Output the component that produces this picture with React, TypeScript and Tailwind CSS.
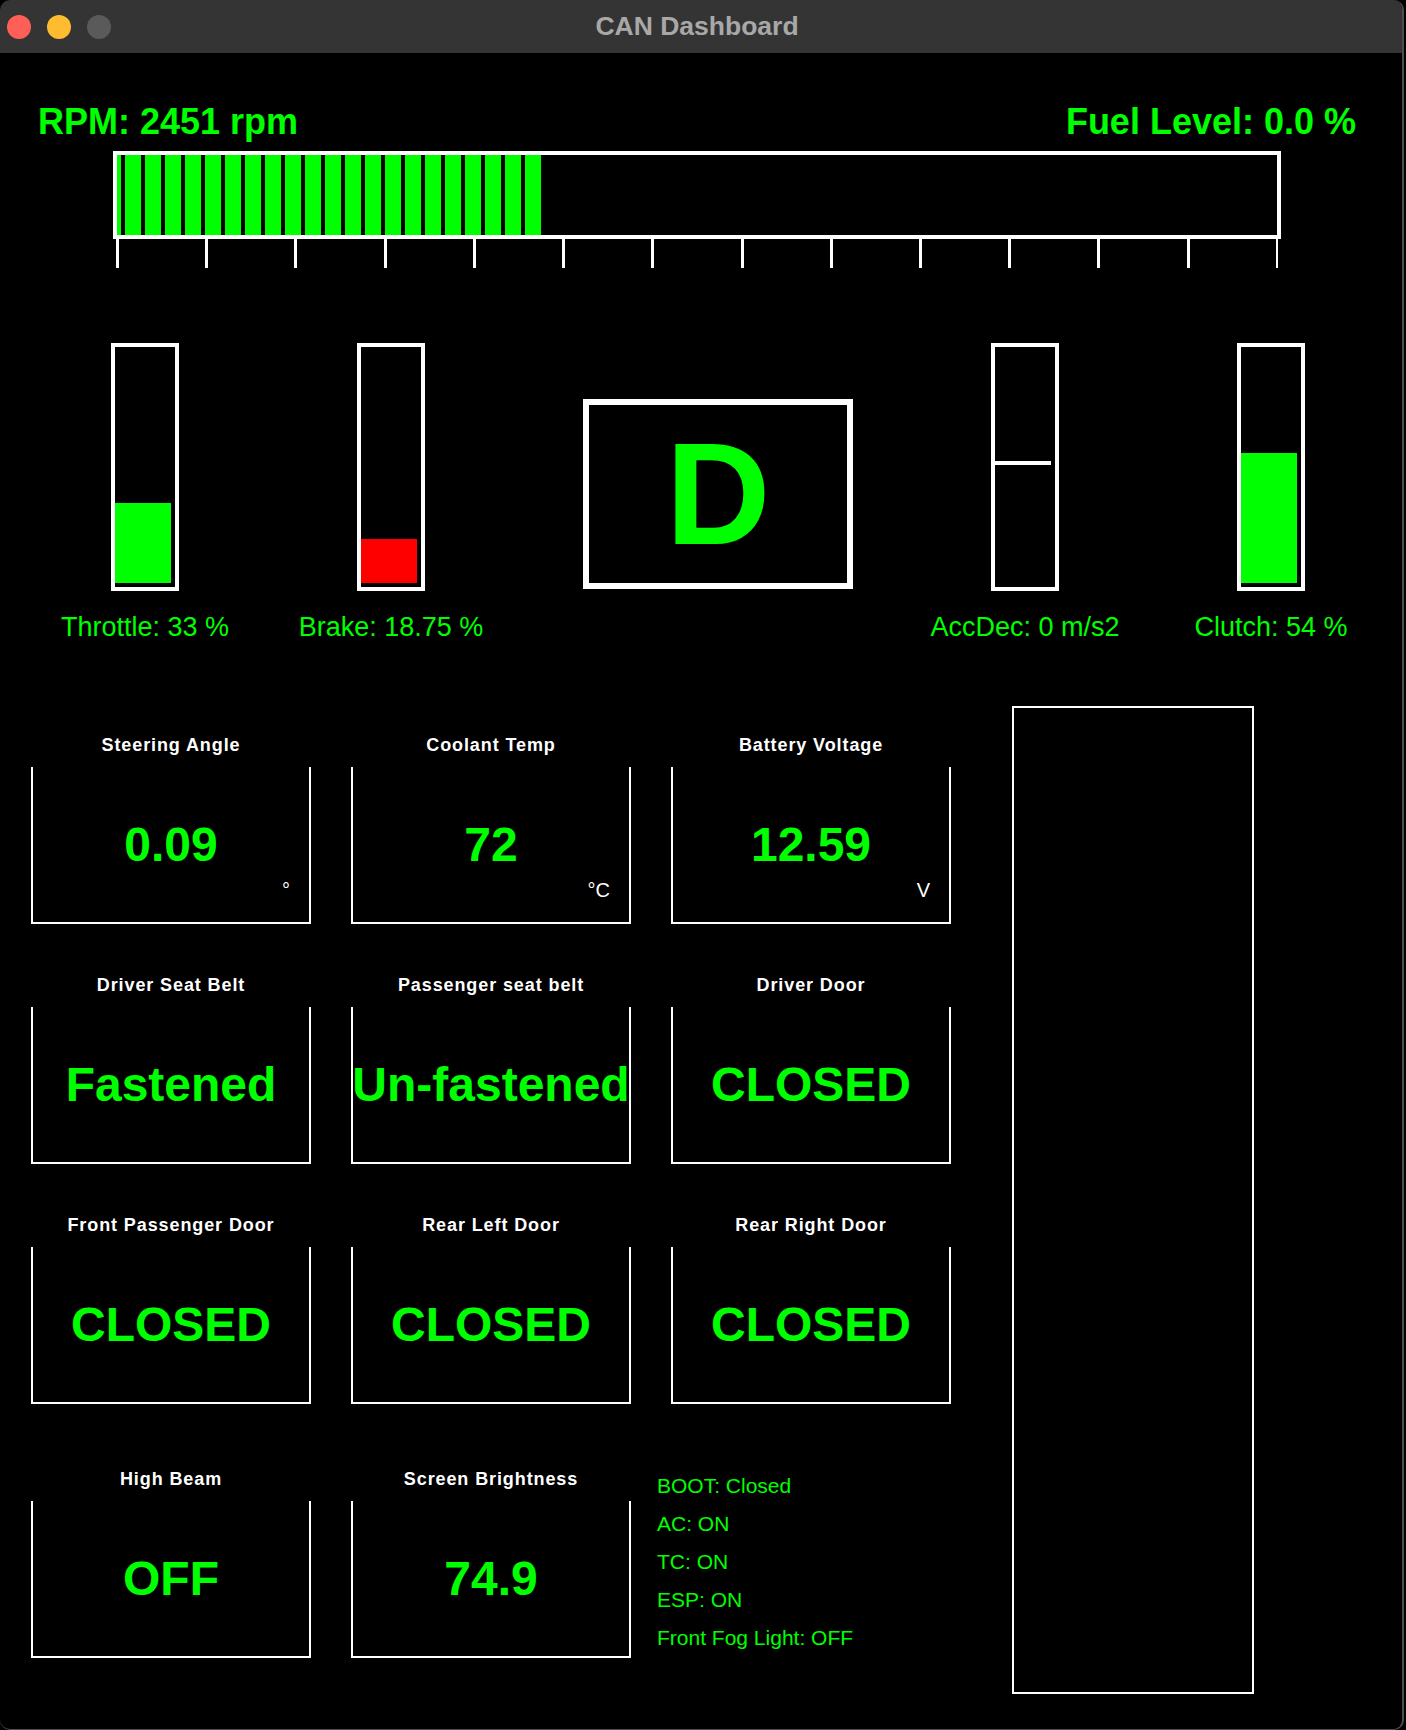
import React from "react";

type CardProps = { title: string; value: string; unit?: string };

function Card({ title, value, unit }: CardProps) {
  return (
    <div className="w-[280px] flex flex-col shrink-0">
      <div className="h-[18px] text-[18px] leading-none font-bold text-white text-center tracking-[0.9px] whitespace-nowrap">
        {title}
      </div>
      <div className="relative mt-[13px] h-[157px] border-2 border-t-0 border-white flex items-center justify-center">
        <span className="text-[48px] font-bold leading-none text-[#00ff00] whitespace-nowrap">{value}</span>
        {unit ? (
          <span className="absolute right-[19px] bottom-[22px] text-[20px] leading-none text-white">{unit}</span>
        ) : null}
      </div>
    </div>
  );
}

function Gauge({ fillClass, label }: { fillClass: string; label: string }) {
  return (
    <div className="w-[246px] flex flex-col items-center shrink-0">
      <div className="w-[68px] h-[248px] border-4 border-white flex flex-col justify-end pr-[4px] pb-[4px]">
        <div className={fillClass} />
      </div>
      <div className="mt-[23px] h-[27px] text-[27px] leading-none text-[#00ff00] whitespace-nowrap">{label}</div>
    </div>
  );
}

export default function App() {
  const segments = Array.from({ length: 21 });
  const ticks = Array.from({ length: 14 });
  return (
    <div className="w-[1406px] h-[1730px] bg-black font-['Liberation_Sans',Arial,sans-serif]">
      <div className="w-[1404px] h-[1730px] rounded-[10px] overflow-hidden border-r-2 border-b border-[#4e4e4e] bg-black flex flex-col">
        {/* Title bar */}
        <div className="h-[53px] shrink-0 bg-[#343434] grid grid-cols-[1fr_auto_1fr] items-center">
          <div className="flex items-center gap-[16px] pl-[7px]">
            <div className="w-[24px] h-[24px] rounded-full bg-[#ff5f57]" />
            <div className="w-[24px] h-[24px] rounded-full bg-[#febc2e]" />
            <div className="w-[24px] h-[24px] rounded-full bg-[#5a5a5a]" />
          </div>
          <div className="text-[26.5px] font-bold leading-none text-[#a8a8a8] pr-[8px]">CAN Dashboard</div>
          <div />
        </div>

        {/* Header */}
        <div className="mt-[51px] h-[36px] flex justify-between pl-[38px] pr-[46px] text-[36px] font-bold leading-none text-[#00ff00]">
          <span>RPM: 2451 rpm</span>
          <span>Fuel Level: 0.0 %</span>
        </div>

        {/* RPM bar */}
        <div className="ml-[113px] mt-[11px] w-[1168px] h-[88px] border-4 border-white flex shrink-0">
          <div className="w-[4px] h-full bg-[#00ff00]" />
          {segments.map((_, i) => (
            <div key={i} className="ml-[4px] w-[16px] h-full bg-[#00ff00]" />
          ))}
        </div>
        <div className="ml-[116px] w-[1162px] h-[29px] flex justify-between shrink-0">
          {ticks.map((_, i) => (
            <div key={i} className={i === 13 ? "w-[2px] h-full bg-white" : "w-[3px] h-full bg-white"} />
          ))}
        </div>

        {/* Gauges row */}
        <div className="mt-[75px] pl-[22px] flex items-start shrink-0">
          <Gauge fillClass="w-full h-[80px] bg-[#00ff00]" label="Throttle: 33 %" />
          <Gauge fillClass="w-full h-[44px] bg-[#ff0000]" label="Brake: 18.75 %" />
          <div className="w-[388px] shrink-0 pt-[56px] pl-[69px]">
            <div className="w-[270px] h-[190px] border-[6px] border-white flex items-center justify-center">
              <span className="text-[145px] font-bold leading-none text-[#00ff00]">D</span>
            </div>
          </div>
          <div className="w-[246px] flex flex-col items-center shrink-0">
            <div className="w-[68px] h-[248px] border-4 border-white flex flex-col pt-[114px] pr-[4px]">
              <div className="w-full h-[4px] bg-white" />
            </div>
            <div className="mt-[23px] h-[27px] text-[27px] leading-none text-[#00ff00] whitespace-nowrap">AccDec: 0 m/s2</div>
          </div>
          <Gauge fillClass="w-full h-[130px] bg-[#00ff00]" label="Clutch: 54 %" />
        </div>

        {/* Lower section */}
        <div className="mt-[65px] pl-[31px] flex items-start">
          <div className="w-[920px] shrink-0 pt-[30px] flex flex-col">
            <div className="flex gap-[40px]">
              <Card title="Steering Angle" value="0.09" unit="°" />
              <Card title="Coolant Temp" value="72" unit="°C" />
              <Card title="Battery Voltage" value="12.59" unit="V" />
            </div>
            <div className="mt-[52px] flex gap-[40px]">
              <Card title="Driver Seat Belt" value="Fastened" />
              <Card title="Passenger seat belt" value="Un-fastened" />
              <Card title="Driver Door" value="CLOSED" />
            </div>
            <div className="mt-[52px] flex gap-[40px]">
              <Card title="Front Passenger Door" value="CLOSED" />
              <Card title="Rear Left Door" value="CLOSED" />
              <Card title="Rear Right Door" value="CLOSED" />
            </div>
            <div className="mt-[66px] flex gap-[40px]">
              <Card title="High Beam" value="OFF" />
              <Card title="Screen Brightness" value="74.9" />
              <div className="-ml-[14px] pt-[6px] flex flex-col gap-[18px] text-[21px] leading-[20px] text-[#00ff00] whitespace-nowrap">
                <span>BOOT: Closed</span>
                <span>AC: ON</span>
                <span>TC: ON</span>
                <span>ESP: ON</span>
                <span>Front Fog Light: OFF</span>
              </div>
            </div>
          </div>
          <div className="ml-[61px] w-[242px] h-[988px] border-2 border-white shrink-0" />
        </div>
      </div>
    </div>
  );
}
